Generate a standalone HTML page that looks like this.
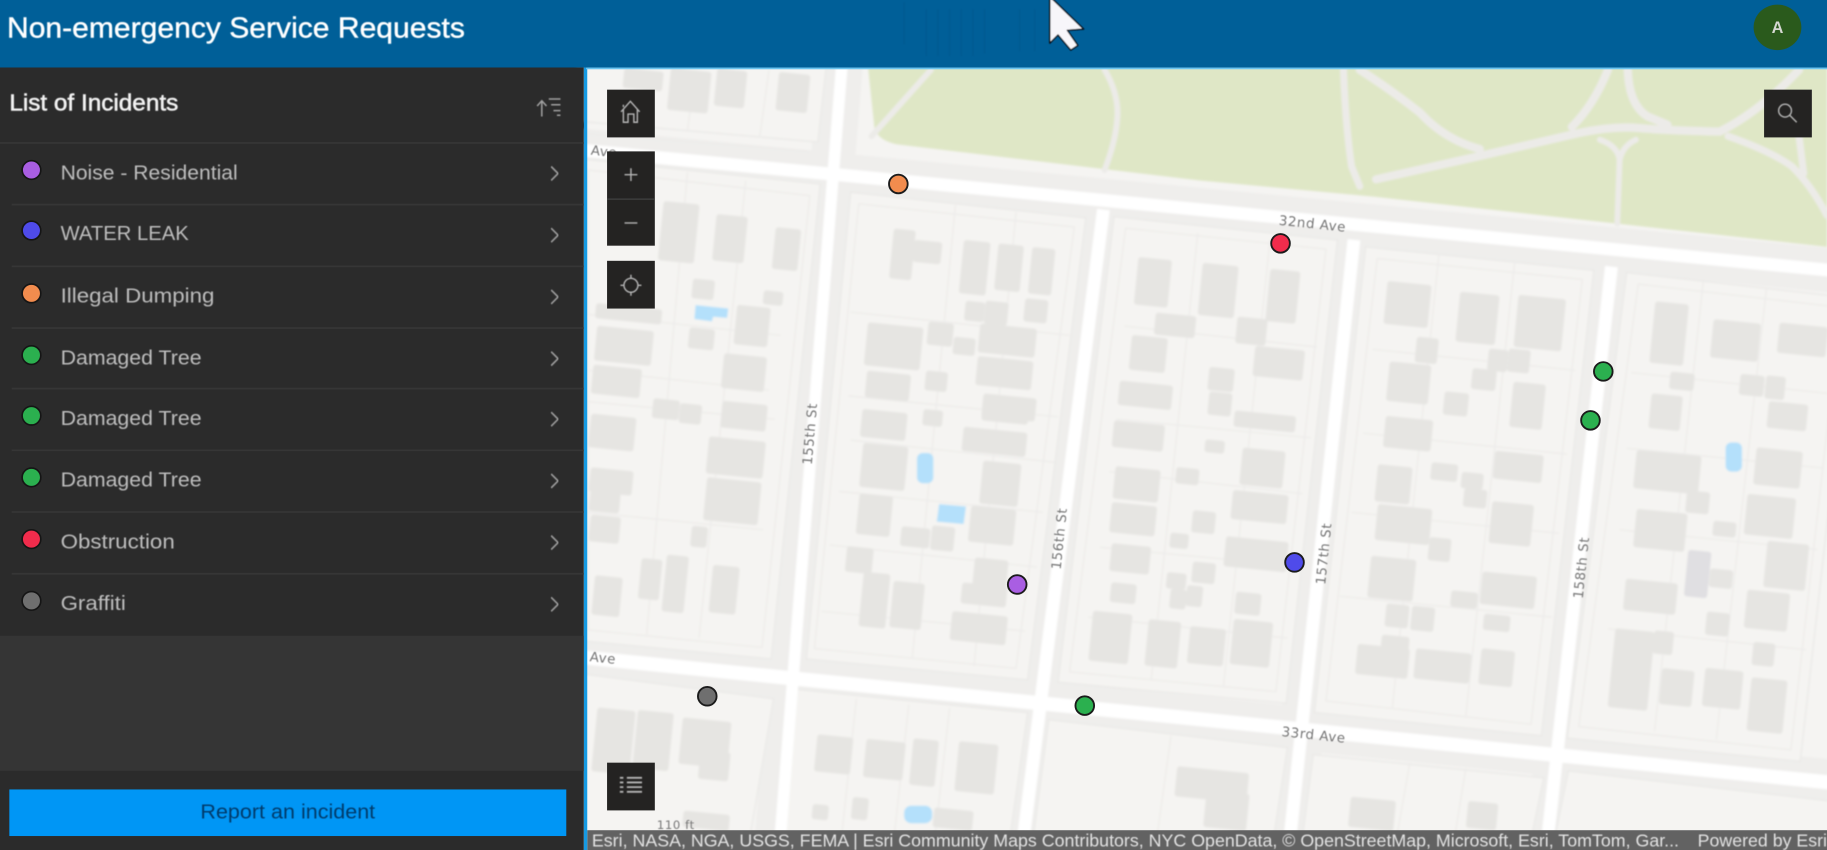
<!DOCTYPE html>
<html lang="en"><head><meta charset="utf-8"><title>Non-emergency Service Requests</title>
<style>
html,body{margin:0;padding:0;background:#2b2b2b;width:1827px;height:850px;overflow:hidden}
svg{display:block;font-family:"Liberation Sans",sans-serif}
.b rect{transform-box:fill-box;transform-origin:center;transform:rotate(5.7deg);rx:2.5px}
.l{font-family:"DejaVu Sans",sans-serif;font-size:11.5px;fill:#757575;letter-spacing:.5px}
.it{font-size:17.5px;fill:#bdbdbd}
.ch{fill:none;stroke:#9c9c9c;stroke-width:1.4}
.ic{fill:none;stroke:#b4b4b4;stroke-width:1.2}
</style></head><body>
<svg width="1827" height="850" viewBox="0 0 1568 730" preserveAspectRatio="none" xmlns="http://www.w3.org/2000/svg">
<defs><filter id="bl" x="-2%" y="-2%" width="104%" height="104%"><feGaussianBlur stdDeviation="1"/></filter>
<filter id="t" x="-5%" y="-20%" width="110%" height="140%"><feGaussianBlur stdDeviation="0.35"/></filter>
<filter id="s" x="-20%" y="-20%" width="140%" height="140%"><feGaussianBlur stdDeviation="0.5"/></filter></defs>

<!-- map -->
<rect x="503" y="58" width="1065" height="672" fill="#f5f4f2"/>
<g filter="url(#bl)">
<!-- street casings -->
<g stroke="#efeeec" stroke-width="38" fill="none">
<path d="M495 129L1580 233"/><path d="M495 564L1580 672"/>
<path d="M722 50L665 740"/><path d="M947 180L877 730"/><path d="M1162 206L1106 730"/><path d="M1383 229L1326 740"/>
</g>
<!-- blocks -->
<g fill="#f5f4f2" stroke="#e8e7e5" stroke-width="1">
<path d="M495 50H710L702 122 495 104Z"/>
<path d="M495 136L704 158 662 566 495 550Z"/>
<path d="M730 165L932 187 882 584 692 566Z"/>
<path d="M956 186L1148 206 1104 604 908 586Z"/>
<path d="M1172 212L1368 232 1323 632 1128 612Z"/>
<path d="M1396 234L1590 256 1545 654 1345 634Z"/>
<path d="M495 578L664 600 640 740H495Z"/>
<path d="M684 592L882 612 864 740H668Z"/>
<path d="M900 618L1105 642 1090 740H884Z"/>
<path d="M1127 648L1325 668 1310 740H1115Z"/>
<path d="M1346 662L1590 690 1570 740H1330Z"/>
</g>
<!-- park -->
<path d="M745 58H1568V212L1180 169 1030 155 770 124Q750 120 750 105Z" fill="#dfe7c6"/>
<g fill="none" stroke="#ecebe8" stroke-linecap="round">
<path stroke-width="6" d="M1153 60Q1155 110 1160 143L1167 160"/>
<path stroke-width="7" d="M1167 60Q1195 78 1219 97 1240 120 1270 128"/>
<path stroke-width="7" d="M1181 154L1270 134 1356 114Q1385 108 1407 110T1476 113Q1510 96 1544 60"/>
<path stroke-width="7" d="M1380 60Q1368 90 1349 109"/>
<path stroke-width="7" d="M1397 60Q1398 90 1414 100L1431 107"/>
<path stroke-width="6" d="M1483 117Q1520 130 1538 143 1555 160 1568 185"/>
<path stroke-width="5" d="M1373 120Q1388 125 1390 137L1388 192"/>
<path stroke-width="5" d="M1404 120Q1393 125 1390 137"/>
<path stroke-width="6" d="M1544 117L1548 149"/>
<path stroke-width="5" d="M799 60L748 117"/>
<path stroke-width="5" d="M948 60Q960 80 959 100T948 146"/>
</g>
<!-- inner lot lines -->
<g fill="none" stroke="#ecebe9" stroke-width="1">
<path d="M737 175L922 195 872 574 699 557Z"/><path d="M966 196L1138 214 1095 594 918 577Z"/><path d="M1182 222L1358 240 1314 622 1138 602Z"/><path d="M1406 244L1580 264 1537 644 1355 624Z"/>
<path d="M505 146L695 168 654 556 505 541Z"/>
<path d="M505 115L695 130"/>
<path d="M597 60L590 112M660 60L652 118M640 155L600 548M590 148L555 545M505 270L670 288M505 345L665 360M505 440L655 455M505 318L660 335"/>
<path d="M820 176L783 565M872 182L836 572M730 268L918 288M728 340L908 358M730 378L905 397M720 422L895 440M712 468L890 487M705 525L880 542"/>
<path d="M1028 200L988 584M1090 206L1050 590M965 280L1130 298M958 360L1125 376M952 405L1118 424M944 470L1112 486M934 530L1105 548"/>
<path d="M1235 218L1195 608M1300 225L1258 615M1178 300L1352 318M1170 372L1345 390M1160 440L1338 458M1150 512L1332 530"/>
<path d="M1462 240L1420 628M1516 248L1473 635M1400 320L1570 338M1396 385L1565 402M1390 455L1560 472M1380 540L1550 558"/>
<path d="M735 600L720 740M780 605L765 740M815 608L800 740M1005 632L990 740M1210 655L1195 740M1258 660L1245 740"/>
</g>

<!-- roads -->
<g stroke="#fff" fill="none">
<path stroke-width="11" d="M495 128.500L1580 233"/>
<path stroke-width="12" d="M495 564L1580 673"/>
<path stroke-width="10" d="M723 50L668 740"/>
<path stroke-width="11" d="M947 180L877 730"/>
<path stroke-width="11" d="M1162 206L1106 730"/>
<path stroke-width="11" d="M1383 229L1326 740"/>
</g>

<!-- buildings -->
<g class="b" fill="#e6e5e2">
<rect x="535" y="60" width="34" height="17"/><rect x="574" y="60" width="35" height="36"/><rect x="614" y="60" width="26" height="32"/><rect x="667" y="63" width="27" height="33"/>
<rect x="567" y="174" width="31" height="51"/><rect x="613" y="185" width="27" height="40"/><rect x="664" y="196" width="22" height="36"/><rect x="594" y="240" width="19" height="17"/><rect x="655" y="250" width="17" height="12"/><rect x="631" y="263" width="29" height="34"/><rect x="591" y="282" width="22" height="18"/><rect x="511" y="263" width="57" height="13"/><rect x="511" y="282" width="49" height="30"/><rect x="508" y="315" width="42" height="25"/><rect x="620" y="305" width="37" height="30"/><rect x="560" y="343" width="23" height="17"/><rect x="583" y="347" width="19" height="17"/><rect x="619" y="346" width="39" height="23"/><rect x="506" y="357" width="39" height="29"/><rect x="607" y="377" width="49" height="32"/><rect x="605" y="412" width="47" height="37"/><rect x="506" y="403" width="37" height="21"/><rect x="506" y="422" width="26" height="18"/><rect x="506" y="443" width="26" height="23"/><rect x="593" y="452" width="14" height="18"/><rect x="549" y="480" width="18" height="35"/><rect x="570" y="477" width="19" height="49"/><rect x="610" y="486" width="23" height="41"/><rect x="509" y="495" width="24" height="34"/>
<rect x="765" y="197" width="19" height="43"/><rect x="784" y="207" width="24" height="19"/><rect x="825" y="207" width="23" height="46"/><rect x="855" y="210" width="22" height="40"/><rect x="884" y="213" width="20" height="40"/><rect x="828" y="259" width="17" height="17"/><rect x="845" y="259" width="20" height="20"/><rect x="879" y="257" width="20" height="20"/><rect x="743" y="279" width="48" height="37"/><rect x="796" y="277" width="22" height="20"/><rect x="818" y="290" width="19" height="15"/><rect x="840" y="280" width="49" height="25"/><rect x="838" y="308" width="48" height="25"/><rect x="743" y="320" width="38" height="23"/><rect x="794" y="319" width="19" height="17"/><rect x="843" y="340" width="46" height="20"/><rect x="739" y="353" width="39" height="24"/><rect x="792" y="352" width="17" height="14"/><rect x="843" y="343" width="40" height="20"/><rect x="826" y="369" width="55" height="21"/><rect x="739" y="382" width="39" height="38"/><rect x="842" y="397" width="33" height="37"/><rect x="736" y="425" width="29" height="35"/><rect x="832" y="436" width="39" height="31"/><rect x="773" y="453" width="25" height="17"/><rect x="799" y="452" width="20" height="21"/><rect x="726" y="470" width="23" height="22"/><rect x="739" y="492" width="23" height="47"/><rect x="765" y="500" width="27" height="40"/><rect x="835" y="480" width="29" height="35"/><rect x="825" y="502" width="39" height="18"/><rect x="816" y="527" width="48" height="25"/>
<rect x="975" y="222" width="29" height="41"/><rect x="1030" y="227" width="31" height="45"/><rect x="1088" y="232" width="26" height="45"/><rect x="991" y="270" width="35" height="19"/><rect x="1061" y="273" width="26" height="23"/><rect x="970" y="289" width="31" height="30"/><rect x="1076" y="299" width="43" height="26"/><rect x="1037" y="316" width="22" height="20"/><rect x="960" y="329" width="46" height="21"/><rect x="1037" y="337" width="20" height="20"/><rect x="1059" y="355" width="53" height="14"/><rect x="955" y="363" width="44" height="23"/><rect x="956" y="402" width="39" height="28"/><rect x="1009" y="402" width="20" height="14"/><rect x="1034" y="378" width="17" height="11"/><rect x="1065" y="386" width="37" height="32"/><rect x="1057" y="423" width="48" height="25"/><rect x="953" y="433" width="39" height="26"/><rect x="1023" y="439" width="20" height="19"/><rect x="1004" y="458" width="16" height="13"/><rect x="953" y="468" width="34" height="24"/><rect x="1051" y="463" width="54" height="26"/><rect x="1023" y="483" width="20" height="18"/><rect x="1001" y="492" width="17" height="14"/><rect x="1004" y="506" width="14" height="17"/><rect x="1018" y="503" width="14" height="18"/><rect x="953" y="501" width="22" height="17"/><rect x="1060" y="509" width="22" height="19"/><rect x="936" y="526" width="34" height="43"/><rect x="984" y="533" width="28" height="40"/><rect x="1020" y="539" width="31" height="32"/><rect x="1057" y="533" width="34" height="39"/>
<rect x="1189" y="243" width="38" height="37"/><rect x="1251" y="252" width="34" height="43"/><rect x="1301" y="255" width="41" height="45"/><rect x="1215" y="290" width="19" height="22"/><rect x="1277" y="300" width="17" height="19"/><rect x="1294" y="300" width="19" height="20"/><rect x="1191" y="312" width="36" height="34"/><rect x="1239" y="337" width="21" height="20"/><rect x="1263" y="317" width="21" height="18"/><rect x="1297" y="329" width="28" height="39"/><rect x="1188" y="359" width="41" height="27"/><rect x="1282" y="389" width="42" height="24"/><rect x="1228" y="398" width="23" height="15"/><rect x="1254" y="406" width="19" height="14"/><rect x="1256" y="420" width="20" height="16"/><rect x="1181" y="400" width="30" height="32"/><rect x="1181" y="435" width="47" height="31"/><rect x="1279" y="432" width="36" height="36"/><rect x="1226" y="462" width="19" height="20"/><rect x="1175" y="479" width="39" height="36"/><rect x="1271" y="493" width="47" height="28"/><rect x="1245" y="508" width="23" height="14"/><rect x="1189" y="519" width="20" height="20"/><rect x="1211" y="521" width="20" height="21"/><rect x="1273" y="528" width="23" height="14"/><rect x="1164" y="555" width="45" height="26"/><rect x="1185" y="546" width="24" height="20"/><rect x="1214" y="559" width="48" height="26"/><rect x="1270" y="558" width="29" height="31"/>
<rect x="1418" y="260" width="29" height="53"/><rect x="1469" y="276" width="41" height="33"/><rect x="1526" y="279" width="42" height="26"/><rect x="1433" y="320" width="21" height="15"/><rect x="1493" y="322" width="21" height="18"/><rect x="1515" y="323" width="17" height="20"/><rect x="1416" y="339" width="27" height="30"/><rect x="1517" y="346" width="34" height="23"/><rect x="1403" y="389" width="56" height="33"/><rect x="1506" y="386" width="40" height="32"/><rect x="1447" y="422" width="20" height="19"/><rect x="1498" y="426" width="42" height="35"/><rect x="1403" y="439" width="44" height="33"/><rect x="1470" y="448" width="20" height="13"/><rect x="1515" y="466" width="36" height="40"/><rect x="1447" y="473" width="20" height="40" fill="#e0dfe2"/><rect x="1467" y="489" width="20" height="16"/><rect x="1394" y="499" width="45" height="27"/><rect x="1498" y="508" width="37" height="33"/><rect x="1464" y="526" width="20" height="20"/><rect x="1383" y="541" width="34" height="68"/><rect x="1419" y="542" width="17" height="20"/><rect x="1504" y="552" width="19" height="20"/><rect x="1425" y="575" width="28" height="31"/><rect x="1462" y="575" width="33" height="33"/><rect x="1501" y="583" width="31" height="46"/>
<rect x="510" y="609" width="33" height="55"/><rect x="545" y="611" width="31" height="50"/><rect x="584" y="618" width="42" height="40"/><rect x="600" y="645" width="26" height="25"/><rect x="586" y="698" width="40" height="14"/>
<rect x="700" y="632" width="31" height="32"/><rect x="742" y="636" width="34" height="33"/><rect x="782" y="635" width="22" height="40"/><rect x="821" y="638" width="34" height="43"/><rect x="697" y="691" width="14" height="13"/><rect x="731" y="685" width="14" height="19"/><rect x="801" y="695" width="34" height="17"/>
<rect x="1009" y="661" width="62" height="26"/><rect x="1034" y="680" width="37" height="32"/><rect x="1158" y="686" width="39" height="26"/><rect x="1259" y="689" width="26" height="23"/>
</g>
<!-- pools -->
<g fill="#b4e0fb">
<path d="M597 262L625 265 624 273 612 272 611 276 596 274Z"/>
<rect x="787" y="389" width="14" height="26" rx="5"/>
<path d="M806 433L829 435 827 450 804 448Z"/>
<rect x="1481" y="380" width="14" height="25" rx="5"/>
<rect x="776" y="692" width="24" height="15" rx="6"/>
</g>
</g>

<!-- labels -->
<g class="l" text-anchor="middle" filter="url(#t)">
<text transform="translate(699,373) rotate(-85)">155th St</text>
<text transform="translate(913,463) rotate(-84)">156th St</text>
<text transform="translate(1140,476) rotate(-84)">157th St</text>
<text transform="translate(1361,488) rotate(-84)">158th St</text>
<text transform="translate(1126,196) rotate(6)">32nd Ave</text>
<text transform="translate(1127,635) rotate(6)">33rd Ave</text>
<text transform="translate(518,134) rotate(6)">Ave</text>
<text transform="translate(517,569) rotate(6)">Ave</text>
<text x="580" y="712" style="font-size:10px">110 ft</text>
</g>

<!-- markers -->
<g stroke="#1b1b1b" stroke-width="1.6">
<circle cx="771" cy="158" r="8" fill="#f28c4e"/>
<circle cx="1099" cy="209" r="8" fill="#f12c4c"/>
<circle cx="1376" cy="319" r="8" fill="#2bb04f"/>
<circle cx="1365" cy="361" r="8" fill="#2bb04f"/>
<circle cx="1111" cy="483" r="8" fill="#4f4bea"/>
<circle cx="873" cy="502" r="8" fill="#a95ee2"/>
<circle cx="931" cy="606" r="8" fill="#2bb04f"/>
<circle cx="607" cy="598" r="8" fill="#6f6f6f"/>
</g>

<!-- map widgets -->
<g fill="#242322">
<rect x="521" y="77" width="41" height="41"/><rect x="521" y="130" width="41" height="81"/><rect x="521" y="224" width="41" height="41"/><rect x="1514" y="77" width="41" height="41"/><rect x="521" y="655" width="41" height="41"/>
</g>
<rect x="521" y="170.500" width="41" height="1" fill="#444"/>
<g class="ic" filter="url(#t)">
<path d="M533 96L541 87 549 96M535 94V105H539V98H544V105H547V94M535 90V92"/>
<path d="M536 150H547M541.500 144.500V155.500"/>
<path d="M536 191.500H547"/>
<circle cx="541.500" cy="245" r="6"/><path d="M541.500 236V239M541.500 251V254M532.500 245H535.500M547.500 245H550.500"/>
<circle cx="1532" cy="95" r="5.500"/><path d="M1536 99L1542 105"/>
<path stroke-width="1.6" d="M532 668H535M532 672H535M532 676H535M532 680H535M538 668H551M538 672H551M538 676H551M538 680H551"/>
</g>

<!-- attribution -->
<rect x="504" y="713" width="1064" height="17" fill="#626262"/>
<g fill="#e2e2e2" font-size="15" filter="url(#t)">
<text x="508" y="727" textLength="933" lengthAdjust="spacingAndGlyphs">Esri, NASA, NGA, USGS, FEMA | Esri Community Maps Contributors, NYC OpenData, © OpenStreetMap, Microsoft, Esri, TomTom, Gar...</text>
<text x="1457" y="727" textLength="111" lengthAdjust="spacingAndGlyphs">Powered by Esri</text>
</g>

<!-- blue edges -->
<rect x="501" y="58" width="3" height="672" fill="#169ae2"/>
<rect x="503" y="58" width="1065" height="1.500" fill="#6cc4ef"/>

<!-- header -->
<rect width="1568" height="58" fill="#005f98"/>
<g stroke="#05578c" stroke-width="1.500" opacity=".45" filter="url(#t)"><path d="M776 2V38M795 8V48M805 8V48M815 8V48M825 8V48M835 8V48M845 8V46M875 8V44M888 8V44"/></g>
<text x="6" y="32" fill="#fff" font-size="25" textLength="393" lengthAdjust="spacingAndGlyphs" stroke="#fff" stroke-width=".35" filter="url(#t)">Non-emergency Service Requests</text>
<ellipse cx="1525.500" cy="23.500" rx="20.500" ry="19.500" fill="#2a5a1c"/>
<text x="1525.500" y="28.500" fill="#d5d8d2" font-size="14" font-weight="bold" text-anchor="middle">A</text>
<path d="M901 -3L930 25 916 26 925 39 919 43 908 30 901 37Z" fill="#f7f6fa" stroke="#0d0d14" stroke-width="1.200" stroke-linejoin="round" filter="url(#s)"/>

<!-- sidebar -->
<rect x="0" y="58" width="501" height="672" fill="#2b2b2b"/>
<rect x="0" y="546" width="501" height="116" fill="#353535"/>
<text x="8" y="95" fill="#f2f2f2" font-size="20" textLength="145" lengthAdjust="spacingAndGlyphs" stroke="#f2f2f2" stroke-width=".45" filter="url(#t)">List of Incidents</text>
<g fill="none" stroke="#a0a0a0" stroke-width="1.300" filter="url(#t)">
<path d="M465 100V87M461 91L465 86.500 469 91"/>
<path d="M471 85H481M473 90H481M475 95H481M478 99H481"/>
</g>
<g fill="#363636">
<rect x="0" y="122" width="501" height="1.500"/><rect x="10" y="175" width="491" height="1.500"/><rect x="10" y="228" width="491" height="1.500"/><rect x="10" y="281" width="491" height="1.500"/><rect x="10" y="333" width="491" height="1.500"/><rect x="10" y="386" width="491" height="1.500"/><rect x="10" y="439" width="491" height="1.500"/><rect x="10" y="492" width="491" height="1.500"/>
</g>
<g stroke="#151515" stroke-width="1.400">
<circle cx="27" cy="146" r="8" fill="#a95ee2"/>
<circle cx="27" cy="198" r="8" fill="#4f4bea"/>
<circle cx="27" cy="252" r="8" fill="#f28c4e"/>
<circle cx="27" cy="305" r="8" fill="#2bb04f"/>
<circle cx="27" cy="357" r="8" fill="#2bb04f"/>
<circle cx="27" cy="410" r="8" fill="#2bb04f"/>
<circle cx="27" cy="463" r="8" fill="#f12c4c"/>
<circle cx="27" cy="516" r="8" fill="#6f6f6f"/>
</g>
<g class="it" filter="url(#t)">
<text x="52" y="154" textLength="152" lengthAdjust="spacingAndGlyphs">Noise - Residential</text>
<text x="52" y="206" textLength="110" lengthAdjust="spacingAndGlyphs">WATER LEAK</text>
<text x="52" y="260" textLength="132" lengthAdjust="spacingAndGlyphs">Illegal Dumping</text>
<text x="52" y="313" textLength="121" lengthAdjust="spacingAndGlyphs">Damaged Tree</text>
<text x="52" y="365" textLength="121" lengthAdjust="spacingAndGlyphs">Damaged Tree</text>
<text x="52" y="418" textLength="121" lengthAdjust="spacingAndGlyphs">Damaged Tree</text>
<text x="52" y="471" textLength="98" lengthAdjust="spacingAndGlyphs">Obstruction</text>
<text x="52" y="524" textLength="56" lengthAdjust="spacingAndGlyphs">Graffiti</text>
</g>
<g class="ch" filter="url(#t)">
<path d="M473 143L479 149 473 155"/><path d="M473 196L479 202 473 208"/><path d="M473 249L479 255 473 261"/><path d="M473 302L479 308 473 314"/><path d="M473 354L479 360 473 366"/><path d="M473 407L479 413 473 419"/><path d="M473 460L479 466 473 472"/><path d="M473 513L479 519 473 525"/>
</g>
<rect x="8" y="678" width="478" height="40" fill="#0096f5"/>
<text x="247" y="703" fill="#053a6b" font-size="17.500" text-anchor="middle" textLength="150" lengthAdjust="spacingAndGlyphs" filter="url(#t)">Report an incident</text>
</svg>
</body></html>
